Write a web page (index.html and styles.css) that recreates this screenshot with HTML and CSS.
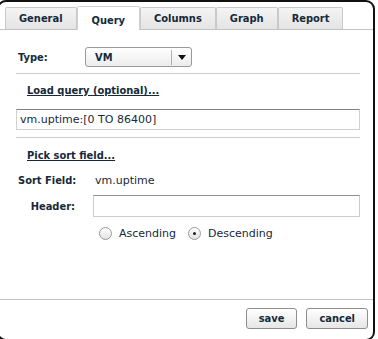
FILE: index.html
```html
<!DOCTYPE html>
<html>
<head>
<meta charset="utf-8">
<link rel="stylesheet" href="styles.css">
</head>
<body>
<div class="dialog">
  <div class="tabs">
    <div class="tab">General</div>
    <div class="tab active">Query</div>
    <div class="tab">Columns</div>
    <div class="tab">Graph</div>
    <div class="tab">Report</div>
  </div>
  <div class="body">
    <div class="row type-row">
      <span class="label">Type:</span>
      <div class="select">
        <span class="select-val">VM</span>
        <span class="select-btn"><svg width="8" height="5" viewBox="0 0 8 5"><path d="M0 0h8L4 5z" fill="#111"/></svg></span>
      </div>
    </div>
    <div class="hr"></div>
    <a class="link load">Load query (optional)...</a>
    <div class="query-input">vm.uptime:[0 TO 86400]</div>
    <div class="hr hr2"></div>
    <a class="link pick">Pick sort field...</a>
    <div class="row sort-row">
      <span class="label">Sort Field:</span>
      <span class="value">vm.uptime</span>
    </div>
    <div class="row header-row">
      <span class="label right">Header:</span>
      <div class="header-input"></div>
    </div>
    <div class="row radio-row">
      <span class="radio"></span><span class="radio-label">Ascending</span>
      <span class="radio checked"></span><span class="radio-label">Descending</span>
    </div>
  </div>
  <div class="footer">
    <button class="btn">save</button>
    <button class="btn">cancel</button>
  </div>
</div>
</body>
</html>
```
FILE: styles.css
```css
html, body {
  margin: 0;
  padding: 0;
  background: #fff;
  overflow: hidden;
}
body {
  font-family: "DejaVu Sans", Verdana, sans-serif;
  font-size: 11px;
  color: #16293b;
}
.tab, .label, .select-val, .link, .btn {
  font-family: "DejaVu Sans Condensed", "DejaVu Sans", Verdana, sans-serif;
  font-weight: bold;
}
.dialog {
  box-sizing: border-box;
  margin-left: -3px;
  width: 378px;
  height: 341px;
  border: 2px solid #111;
  border-radius: 9px;
  display: flex;
  flex-direction: column;
}
.tabs {
  display: flex;
  padding: 4px 0 0 6px;
  height: 23px;
  border-bottom: 1px solid #bfc4c4;
}
.tab {
  box-sizing: border-box;
  margin-top: 1px;
  height: 22px;
  padding: 4px 13px 0 13px;
  background: linear-gradient(#f4f4f4, #e4e4e4);
  border: 1px solid #c9c9c9;
  border-bottom: none;
  border-radius: 2px 2px 0 0;
}
.tab.active {
  background: #fff;
  margin-top: 0;
  height: 24px;
  padding-top: 7px;
  margin-bottom: -1px;
  border-color: #d0d0d0;
  padding-left: 14px;
  padding-right: 14px;
}
.body {
  flex: 1;
  padding: 0 13px 0 17px;
  display: flex;
  flex-direction: column;
}
.row {
  display: flex;
  align-items: center;
}
.label {
  width: 67px;
  padding-left: 2px;
}
.type-row {
  margin-top: 17px;
  height: 20px;
}
.select {
  box-sizing: border-box;
  width: 107px;
  height: 20px;
  border: 1px solid #9a9a9a;
  border-radius: 3px;
  background: linear-gradient(#ffffff, #ececec);
  display: flex;
  align-items: center;
}
.select-val {
  flex: 1;
  padding-left: 9px;
  padding-top: 1px;
}
.select-btn {
  width: 19px;
  height: 15px;
  border-left: 1px solid #b0b0b0;
  display: flex;
  align-items: center;
  justify-content: center;
}
.select-btn svg { display: block; margin-left: 1px; }
.hr {
  height: 1px;
  background: #c9cccc;
  margin-top: 6px;
}
.hr2 { margin-top: 7px; }
.link {
  text-decoration: underline;
  padding-left: 11px;
  line-height: 13px;
}
.load { margin-top: 10px; }
.query-input {
  box-sizing: border-box;
  margin-top: 12px;
  height: 21px;
  border: 1px solid #cfd1d1;
  border-top-color: #808080;
  padding: 3px 3px 0 3px;
}
.pick { margin-top: 11px; }
.sort-row {
  margin-top: 12px;
  height: 13px;
}
.value { padding-left: 10px; }
.header-row {
  margin-top: 8px;
  height: 22px;
}
.label.right {
  text-align: right;
  width: 59px;
  padding-left: 0;
}
.header-input {
  box-sizing: border-box;
  margin-left: 18px;
  flex: 1;
  height: 22px;
  border: 1px solid #c9cccc;
  border-top-color: #8f8f8f;
}
.radio-row {
  margin-top: 9px;
  padding-left: 83px;
  height: 14px;
}
.radio {
  box-sizing: border-box;
  width: 13px;
  height: 13px;
  border: 1px solid #9a9a9a;
  border-radius: 50%;
  background: linear-gradient(#ffffff, #e2e2e2);
  position: relative;
}
.radio.checked::after {
  content: "";
  position: absolute;
  left: 4px;
  top: 4px;
  width: 3px;
  height: 3px;
  border-radius: 50%;
  background: #222;
}
.radio-label {
  margin-left: 7px;
  margin-right: 12px;
}
.footer {
  height: 40px;
  border-top: 1px solid #c4c4c4;
  display: flex;
  justify-content: flex-end;
  align-items: flex-start;
  padding: 8px 5px 0 0;
  box-sizing: border-box;
}
.btn {
  font-size: 11px;
  color: #16293b;
  height: 21px;
  border: 1px solid #8e8e8e;
  border-radius: 3px;
  background: linear-gradient(#ffffff, #e6e6e6);
  padding: 0 12px;
  margin-left: 9px;
}
```
